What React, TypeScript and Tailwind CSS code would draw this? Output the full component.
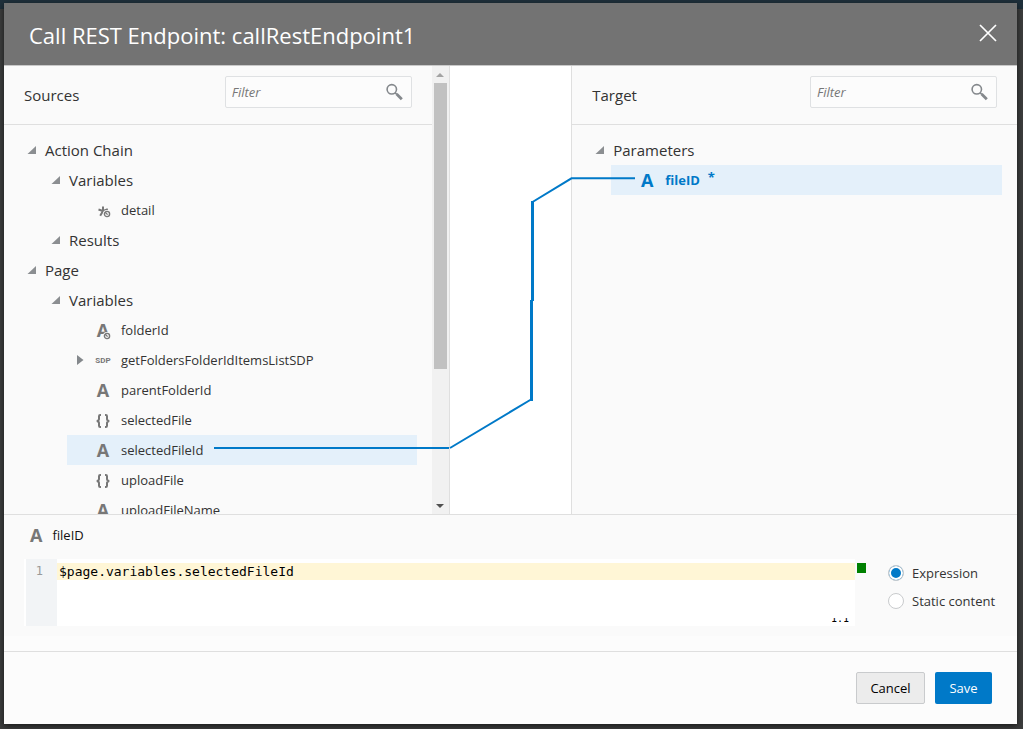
import { useState } from "react";
import type { ReactNode } from "react";

type Kind = "text" | "textRef" | "any" | "object" | "sdp";

const LetterIcon = () => <span className="text-lg leading-[18px] font-bold">A</span>;

const RefBadge = () => (
  <svg viewBox="0 0 8 8" className="absolute -right-[2px] -bottom-px size-2">
    <circle cx="4" cy="4" r="4" fill="#fafafa" />
    <circle cx="4" cy="4" r="2.6" fill="none" stroke="currentColor" strokeWidth="1.4" />
    <path d="M2.2 2.2L4.6 4.6" stroke="currentColor" strokeWidth="1.3" />
  </svg>
);

const KindIcon = ({ kind }: { kind: Kind }) => {
  if (kind === "text") return <LetterIcon />;
  if (kind === "textRef")
    return (
      <span className="relative flex">
        <LetterIcon />
        <RefBadge />
      </span>
    );
  if (kind === "any")
    return (
      <span className="relative mt-[2px] flex size-[11px]">
        <svg viewBox="0 0 11 11" className="size-[11px]" fill="none" stroke="currentColor" strokeWidth="2">
          <path d="M5 0.5V5M0.5 3.5L5 5M9.8 3.2L5 5M5 5L2.2 9.8" />
        </svg>
        <RefBadge />
      </span>
    );
  if (kind === "object")
    return (
      <svg viewBox="0 0 14 14" className="mt-px size-[14px]" fill="none" stroke="currentColor" strokeWidth="2">
        <path d="M5 1H4.200Q3 1 3 2.300V5Q3 6.600 0.800 7Q3 7.400 3 9V11.700Q3 13 4.200 13H5" />
        <path d="M9 1H9.800Q11 1 11 2.300V5Q11 6.600 13.200 7Q11 7.400 11 9V11.700Q11 13 9.800 13H9" />
      </svg>
    );
  return <span className="pt-[2px] font-[Roboto] text-[8px] leading-none font-bold">SDP</span>;
};

const Group = ({ label, children }: { label: string; children?: ReactNode }) => {
  const [open, setOpen] = useState(true);
  return (
    <li>
      <button
        type="button"
        aria-expanded={open}
        onClick={() => setOpen(!open)}
        className="flex h-[30px] w-full items-center gap-2 pl-2 text-[15px] text-[#333]"
      >
        <svg viewBox="0 0 10 10" className="size-[10px]" fill="#8b8e91">
          {open ? <path d="M9 1v8H0.5z" /> : <path d="M2 0v10l6-5z" />}
        </svg>
        {label}
      </button>
      {open && children && <ul className="ml-6">{children}</ul>}
    </li>
  );
};

type LeafProps = { kind: Kind; label: string; expandable?: boolean; selected?: boolean; required?: boolean };

const Leaf = ({ kind, label, expandable, selected, required }: LeafProps) => (
  <li
    className={`flex h-[30px] items-center text-[13px] ${selected ? "bg-[#e4f0fa]" : ""} ${
      required ? "font-bold text-[#0079c8]" : "text-[#333]"
    }`}
  >
    <span className="flex w-7 shrink-0 pl-[10px]">
      {expandable && (
        <button type="button" aria-label={`Expand ${label}`}>
          <svg viewBox="0 0 7 10" className="h-[10px] w-[7px]" fill="#84888c">
            <path d="M0 0v10l6.5-5z" />
          </svg>
        </button>
      )}
    </span>
    <span className={`mr-[10px] flex w-4 shrink-0 justify-center ${required ? "" : "text-[#777]"}`}>
      <KindIcon kind={kind} />
    </span>
    <span className="pt-[2px]">{label}</span>
    {required && <span className="mb-1 ml-2">*</span>}
  </li>
);

const PanelHeader = ({ title, id }: { title: string; id: string }) => (
  <div className="flex h-[59px] shrink-0 items-center justify-between border-b border-[#dfdfdf] px-5">
    <label htmlFor={id} className="text-[15px] text-[#333]">
      {title}
    </label>
    <div className="relative mt-[10px] self-start">
      <input
        id={id}
        type="text"
        placeholder="Filter"
        className="block h-8 w-[187px] rounded-[2px] border border-[#dfe1e3] bg-[#fcfcfc] pr-8 pl-[6px] text-[13px] outline-none placeholder:text-[#777] placeholder:italic"
      />
      <svg viewBox="0 0 18 18" className="absolute top-[7px] right-2 size-[18px]" fill="none" stroke="#84888c">
        <circle cx="5.8" cy="6.3" r="4.7" strokeWidth="1.6" />
        <path d="M9.200 9.800l1.600 1.600" strokeWidth="1.6" />
        <path d="M10.600 11l5.200 5.200" strokeWidth="2.8" />
      </svg>
    </div>
  </div>
);

const Scrollbar = () => (
  <div aria-hidden="true" className="flex w-[17px] shrink-0 flex-col items-center bg-[#f1f1f1]">
    <span className="flex h-[17px] items-center">
      <svg viewBox="0 0 8 4" className="h-1 w-2" fill="#a3a3a3">
        <path d="M0 4h8L4 0z" />
      </svg>
    </span>
    <span className="flex w-[13px] flex-1 flex-col">
      <span className="h-[69%] bg-[#c1c1c1]" />
    </span>
    <span className="flex h-[17px] items-center">
      <svg viewBox="0 0 8 4" className="h-1 w-2" fill="#505050">
        <path d="M0 0h8L4 4z" />
      </svg>
    </span>
  </div>
);

const Connector = () => (
  <svg
    aria-hidden="true"
    viewBox="0 0 1013 448"
    preserveAspectRatio="none"
    className="pointer-events-none absolute inset-0 size-full"
    fill="none"
    stroke="#0079c8"
    strokeWidth="2"
  >
    <path d="M210 382H445M446 382L527 333.500M528.500 136L567.500 112.300H631" />
    <path d="M528.500 135V235M527.500 234V335" strokeWidth="3" />
  </svg>
);

const radioClass =
  "size-4 appearance-none rounded-full border border-[#c9cbcd] bg-white checked:bg-[#0079c8] checked:shadow-[inset_0_0_0_2px_white]";

export default function App() {
  const [expression, setExpression] = useState("$page.variables.selectedFileId");
  const [mode, setMode] = useState("expression");

  return (
    <div className="h-screen bg-[linear-gradient(#1f303b_9px,#3c3d3d_9px)] pt-[3px] pr-[6px] pb-[5px] pl-1 font-['Open_Sans',sans-serif]">
      <div role="dialog" aria-labelledby="dialog-title" className="flex h-full flex-col bg-[#fcfcfc] shadow-[0_2px_6px_rgba(0,0,0,0.6)]">
        <header className="flex h-[63px] shrink-0 items-center justify-between border-b border-[#c9c9c9] bg-[#737373] pr-5 pl-[25px] text-white">
          <h1 id="dialog-title" className="pt-[3px] text-[22px]">
            Call REST Endpoint: callRestEndpoint1
          </h1>
          <button type="button" aria-label="Close" className="pb-[2px]">
            <svg viewBox="0 0 18 18" className="size-[18px]" stroke="currentColor" strokeWidth="1.7">
              <path d="M1 1l16 16M17 1L1 17" />
            </svg>
          </button>
        </header>

        <main className="relative grid min-h-0 flex-1 grid-cols-[11fr_3fr_11fr] grid-rows-[minmax(0,1fr)] bg-white">
          <section className="flex border-r border-[#dfdfdf] bg-[#fafafa]">
            <div className="flex min-w-0 flex-1 flex-col overflow-hidden">
              <PanelHeader title="Sources" id="sources-filter" />
              <ul className="min-h-0 flex-1 overflow-hidden px-[15px] pt-[10px]">
                <Group label="Action Chain">
                  <Group label="Variables">
                    <Leaf kind="any" label="detail" />
                  </Group>
                  <Group label="Results" />
                </Group>
                <Group label="Page">
                  <Group label="Variables">
                    <Leaf kind="textRef" label="folderId" />
                    <Leaf kind="sdp" label="getFoldersFolderIdItemsListSDP" expandable />
                    <Leaf kind="text" label="parentFolderId" />
                    <Leaf kind="object" label="selectedFile" />
                    <Leaf kind="text" label="selectedFileId" selected />
                    <Leaf kind="object" label="uploadFile" />
                    <Leaf kind="text" label="uploadFileName" />
                  </Group>
                </Group>
              </ul>
            </div>
            <Scrollbar />
          </section>

          <section className="col-start-3 border-l border-[#dfdfdf] bg-[#fafafa]">
            <PanelHeader title="Target" id="target-filter" />
            <ul className="px-[15px] pt-[10px]">
              <Group label="Parameters">
                <Leaf kind="text" label="fileID" selected required />
              </Group>
            </ul>
          </section>
          <Connector />
        </main>

        <section className="shrink-0 border-t border-[#dfdfdf] bg-[#fafafa] px-5 pt-[5px] pb-[10px]">
          <label htmlFor="expression" className="flex h-[30px] items-center gap-[10px] pl-[6px] text-[13px] text-[#111]">
            <span className="flex text-[#777]">
              <LetterIcon />
            </span>
            <span className="pt-[2px]">fileID</span>
          </label>
          <div className="mt-[9px] flex items-start">
            <div className="flex h-[67px] flex-1 border-l-2 border-white bg-white font-['DejaVu_Sans_Mono',monospace]">
              <div className="w-[31px] bg-[#f2f4f6] pt-1 pr-[14px] text-right text-xs leading-[17px] text-[#999]">1</div>
              <div className="flex flex-1 flex-col justify-between pt-1">
                <input
                  id="expression"
                  type="text"
                  spellCheck={false}
                  value={expression}
                  onChange={(e) => setExpression(e.target.value)}
                  className="h-[17px] w-full bg-[#fff6d6] pl-[2px] text-[13px] leading-[17px] text-black outline-none"
                />
                <div className="flex h-2 items-end justify-end overflow-hidden pr-[6px] text-[10px] leading-[14px]">
                  1:1
                </div>
              </div>
            </div>
            <span className="mt-1 ml-[2px] h-[10px] w-[9px] bg-[#008000]" />
            <fieldset className="ml-[22px] flex w-[109px] flex-col gap-2 pt-1 text-[13px] whitespace-nowrap text-[#333]">
              <label className="flex h-5 items-center gap-2">
                <input type="radio" name="mode" checked={mode === "expression"} onChange={() => setMode("expression")} className={radioClass} />
                <span className="pt-[2px]">Expression</span>
              </label>
              <label className="flex h-5 items-center gap-2">
                <input type="radio" name="mode" checked={mode === "static"} onChange={() => setMode("static")} className={radioClass} />
                <span className="pt-[2px]">Static content</span>
              </label>
            </fieldset>
          </div>
        </section>

        <footer className="mt-[15px] flex shrink-0 justify-end gap-[10px] border-t border-[#dfdfdf] px-[25px] py-5 text-[13px]">
          <button type="button" className="h-8 w-[69px] rounded-[2px] border border-[#c9cbcd] bg-[#ececec] pt-[2px] text-black">
            Cancel
          </button>
          <button type="button" className="h-8 w-[57px] rounded-[2px] bg-[#0079c8] pt-[2px] text-white">
            Save
          </button>
        </footer>
      </div>
    </div>
  );
}
